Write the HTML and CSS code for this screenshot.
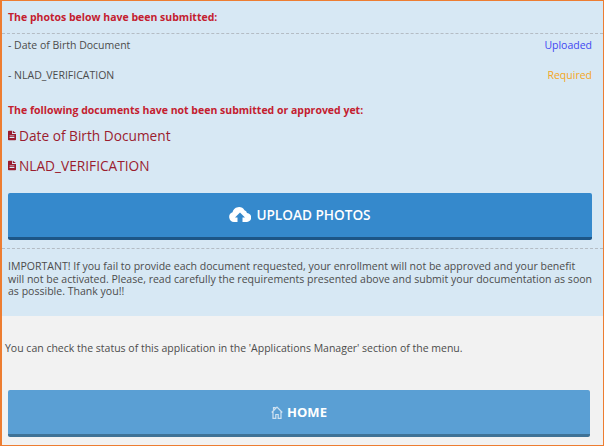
FILE: index.html
```html
<!DOCTYPE html>
<html lang="en">
<head>
    <meta charset="UTF-8">
    <title>Documents</title>
    <link rel="stylesheet" href="styles.css">
</head>
<body>
    <div class="frame">
        <div class="panel">
            <h4 class="title first">The photos below have been submitted:</h4>
            <div class="status-list">
                <div class="status-row">
                    <span>- Date of Birth Document</span>
                    <span class="uploaded">Uploaded</span>
                </div>
                <div class="status-row">
                    <span>- NLAD_VERIFICATION</span>
                    <span class="required">Required</span>
                </div>
            </div>
            <h4 class="title">The following documents have not been submitted or approved yet:</h4>
            <div class="doc doc-first">
                <svg class="doc-icon" viewBox="0 0 10 12"><path fill-rule="evenodd" d="M0 1q0-1 1-1h4v4h5v7q0 1-1 1H1q-1 0-1-1zM6 0l4 3H6zM2 6v1h6V6zM2 8v1h6V8z"/></svg>
                <span>Date of Birth Document</span>
            </div>
            <div class="doc">
                <svg class="doc-icon" viewBox="0 0 10 12"><path fill-rule="evenodd" d="M0 1q0-1 1-1h4v4h5v7q0 1-1 1H1q-1 0-1-1zM6 0l4 3H6zM2 6v1h6V6zM2 8v1h6V8z"/></svg>
                <span>NLAD_VERIFICATION</span>
            </div>
            <button class="btn btn-upload">
                <svg class="cloud" viewBox="0 0 22 15"><path fill-rule="evenodd" d="M5 15a5 5 0 0 1-1.500-9.700A6.500 6.500 0 0 1 15.500 3.300 3.500 3.500 0 0 1 18 6a4.500 4.500 0 0 1-.5 9h-4v-4.500h2.500L11 5.500l-5 5h2.500V15z"/></svg>
                UPLOAD PHOTOS
            </button>
            <p class="notice">IMPORTANT! If you fail to provide each document requested, your enrollment will not be approved and your benefit will not be activated. Please, read carefully the requirements presented above and submit your documentation as soon as possible. Thank you!!</p>
        </div>
        <p class="status-note">You can check the status of this application in the 'Applications Manager' section of the menu.</p>
        <div class="home-wrap">
            <button class="btn btn-home">
                <svg class="house" viewBox="0 0 12 13"><path fill="none" stroke="#cfe2f1" stroke-width="1.200" d="M.7 6.500 6 1.200l5.300 5.300M2 5.500V12.300h2.800V8.500h2.400v3.800H10V5.500M2.500 3.800V1.500h1.500v1"/></svg>
                HOME
            </button>
        </div>
    </div>
</body>
</html>
```

FILE: styles.css
```css
html, body {
    margin: 0;
    height: 100%;
}
body {
    font-family: "Open Sans", sans-serif;
    font-size: 10.5px;
    color: #4c4c4c;
    background-color: #f2f2f2;
}
.frame {
    height: 446px;
    box-sizing: border-box;
    border: 1px solid #ed7d31;
    border-left-width: 2px;
    overflow: hidden;
}
.panel {
    height: 315px;
    box-sizing: border-box;
    background-color: #d7e8f4;
    padding-top: 9px;
}
.title {
    margin: 0 6px;
    font-size: 10.5px;
    line-height: 15px;
    font-weight: 700;
    color: #c4202f;
}
.status-list {
    margin-top: 8px;
    border-top: 1px dashed #b4bcc4;
    margin-bottom: 18px;
    padding-top: 1px;
}
.status-row {
    display: flex;
    justify-content: space-between;
    height: 30px;
    line-height: 20px;
    padding: 0 11px 0 6px;
}
.status-row:last-child {
    height: 20px;
}
.uploaded {
    color: #3f47f2;
}
.required {
    color: #f5a623;
}
.doc {
    display: flex;
    align-items: center;
    gap: 3px;
    height: 30px;
    margin-left: 6px;
    font-size: 13.7px;
    color: #9b1c2e;
}
.doc-first {
    margin-top: 2px;
}
.doc-icon {
    width: 8px;
    height: 11px;
    fill: #9b1c2e;
}
.btn {
    display: flex;
    align-items: center;
    justify-content: center;
    width: 100%;
    border: none;
    border-radius: 2px;
    font-family: inherit;
    font-weight: 600;
    color: white;
    cursor: pointer;
}
.btn-upload {
    gap: 5px;
    width: 584px;
    height: 47px;
    margin: 13px 0 0 6px;
    padding-bottom: 2px;
    font-size: 13.6px;
    background-color: #3589cc;
    border-bottom: 3px solid #1d5687;
}
.cloud {
    width: 22px;
    height: 15px;
    fill: white;
}
.notice {
    margin: 8px 0 0;
    padding: 11px 10px 0 6px;
    border-top: 1px dashed #b4bcc4;
    font-size: 10.55px;
    line-height: 12.5px;
}
.status-note {
    margin: 25px 0 0 3px;
    line-height: 14px;
}
.home-wrap {
    margin: 35px 0 0 6px;
}
.btn-home {
    gap: 4px;
    width: 582px;
    height: 47px;
    font-size: 13px;
    font-weight: 700;
    background-color: #5a9fd4;
    border-bottom: 3px solid #3f7296;
}
.house {
    width: 12px;
    height: 13px;
}
```
